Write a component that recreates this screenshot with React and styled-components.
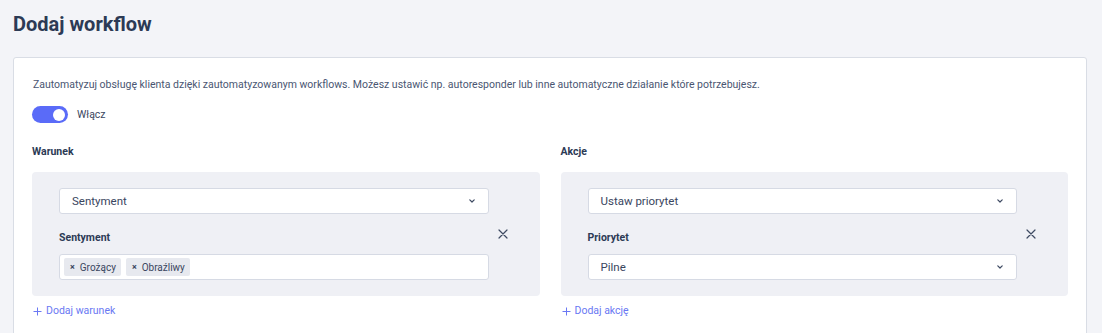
import React from "react";
import styled, { createGlobalStyle } from "styled-components";

const Global = createGlobalStyle`
  * { box-sizing: border-box; }
  html, body { margin: 0; padding: 0; background: #f3f4f8; }
  body { font-family: Roboto, "Noto Sans", sans-serif; color: #2c3a55; }
`;

const Page = styled.div`
  padding: 10px 15px 0 13px;
  height: 333px;
  overflow: hidden;
`;

const Title = styled.h1`
  margin: 0;
  font-size: 20px;
  line-height: 28px;
  font-weight: 700;
  color: #2c3a55;
`;

const Card = styled.div`
  margin-top: 19px;
  background: #fff;
  border: 1px solid #d9dde5;
  border-radius: 3px;
  padding: 19px 18px 40px 18px;
`;

const Description = styled.p`
  margin: 0 0 0 1px;
  font-size: 10.5px;
  line-height: 16px;
  color: #4a5672;
`;

const ToggleRow = styled.label`
  display: flex;
  align-items: center;
  gap: 9px;
  margin-top: 13px;
  font-size: 10.5px;
  font-weight: 400;
  color: #3a4660;
`;

const Toggle = styled.span`
  position: relative;
  width: 36px;
  height: 17px;
  border-radius: 9px;
  background: ${(p) => (p.$on ? "#5a6bf8" : "#cfd4de")};
  &::after {
    content: "";
    position: absolute;
    top: 2.5px;
    left: ${(p) => (p.$on ? "21px" : "3px")};
    width: 12px;
    height: 12px;
    border-radius: 50%;
    background: #fff;
  }
`;

const Columns = styled.div`
  display: grid;
  grid-template-columns: 1fr 1fr;
  gap: 21px;
  margin-top: 21px;
`;

const Column = styled.div`
  display: flex;
  flex-direction: column;
`;

const SectionLabel = styled.div`
  font-size: 10.5px;
  font-weight: 700;
  line-height: 16px;
  color: #2c3a55;
`;

const Panel = styled.div`
  margin-top: 12px;
  background: #eff0f5;
  border-radius: 4px;
  padding: 16px 25px 16px 27px;
  display: flex;
  align-items: center;
  gap: 2px;
`;

const Fields = styled.div`
  flex: 1;
  display: flex;
  flex-direction: column;
`;

const FieldLabel = styled.div`
  margin-top: 16px;
  margin-bottom: 8px;
  font-size: 10.5px;
  line-height: 16px;
  font-weight: 700;
  color: #2c3a55;
`;

const SelectBox = styled.div`
  height: 26px;
  background: #fff;
  border: 1px solid #d6dae4;
  border-radius: 3px;
  display: flex;
  align-items: center;
  justify-content: space-between;
  padding: 0 13px 0 12px;
  font-size: 11.5px;
  color: #3a4660;
`;

const MultiBox = styled.div`
  height: 26px;
  background: #fff;
  border: 1px solid #d6dae4;
  border-radius: 3px;
  display: flex;
  align-items: center;
  gap: 5px;
  padding: 0 4px;
`;

const Tag = styled.span`
  display: inline-flex;
  align-items: center;
  height: 18px;
  padding: 0 5px 0 6px;
  background: #e7e9ef;
  border-radius: 2px;
  font-size: 10px;
  color: #3a4660;
  gap: 5px;
`;

const TagX = styled.span`
  font-size: 9px;
  font-weight: 700;
  color: #3a4660;
  line-height: 1;
`;

const RemoveButton = styled.button`
  width: 24px;
  height: 24px;
  border: 0;
  background: transparent;
  padding: 0;
  display: flex;
  align-items: center;
  justify-content: center;
  color: #3e4a62;
  cursor: pointer;
`;

const AddLink = styled.a`
  margin-top: 8px;
  margin-left: 1px;
  display: inline-flex;
  align-items: center;
  gap: 4px;
  font-size: 10.5px;
  font-weight: 400;
  color: #6a78f3;
  text-decoration: none;
  line-height: 14px;
`;

const Chevron = () => (
  <svg width="6" height="4" viewBox="0 0 6 4" fill="none">
    <path d="M0.8 0.8l2.2 2.2 2.2-2.2" stroke="#3e4a62" strokeWidth="1.2" strokeLinecap="round" strokeLinejoin="round" />
  </svg>
);

const Cross = () => (
  <svg width="10" height="10" viewBox="0 0 10 10" fill="none">
    <path d="M1 1l8 8M9 1l-8 8" stroke="#3e4a62" strokeWidth="1.2" strokeLinecap="round" />
  </svg>
);

const Plus = () => (
  <svg width="9" height="9" viewBox="0 0 9 9" fill="none">
    <path d="M4.5 0.5v8M0.5 4.5h8" stroke="#6a78f3" strokeWidth="1" />
  </svg>
);

const Select = ({ value }) => (
  <SelectBox>
    <span>{value}</span>
    <Chevron />
  </SelectBox>
);

export default function App() {
  return (
    <>
      <Global />
      <Page>
        <Title>Dodaj workflow</Title>
        <Card>
          <Description>
            Zautomatyzuj obsługę klienta dzięki zautomatyzowanym workflows. Możesz ustawić np. autoresponder lub inne automatyczne działanie które potrzebujesz.
          </Description>
          <ToggleRow>
            <Toggle $on />
            Włącz
          </ToggleRow>
          <Columns>
            <Column>
              <SectionLabel>Warunek</SectionLabel>
              <Panel>
                <Fields>
                  <Select value="Sentyment" />
                  <FieldLabel>Sentyment</FieldLabel>
                  <MultiBox>
                    <Tag><TagX>×</TagX>Grożący</Tag>
                    <Tag><TagX>×</TagX>Obraźliwy</Tag>
                  </MultiBox>
                </Fields>
                <RemoveButton aria-label="Usuń"><Cross /></RemoveButton>
              </Panel>
              <AddLink href="#"><Plus />Dodaj warunek</AddLink>
            </Column>
            <Column>
              <SectionLabel>Akcje</SectionLabel>
              <Panel>
                <Fields>
                  <Select value="Ustaw priorytet" />
                  <FieldLabel>Priorytet</FieldLabel>
                  <Select value="Pilne" />
                </Fields>
                <RemoveButton aria-label="Usuń"><Cross /></RemoveButton>
              </Panel>
              <AddLink href="#"><Plus />Dodaj akcję</AddLink>
            </Column>
          </Columns>
        </Card>
      </Page>
    </>
  );
}
